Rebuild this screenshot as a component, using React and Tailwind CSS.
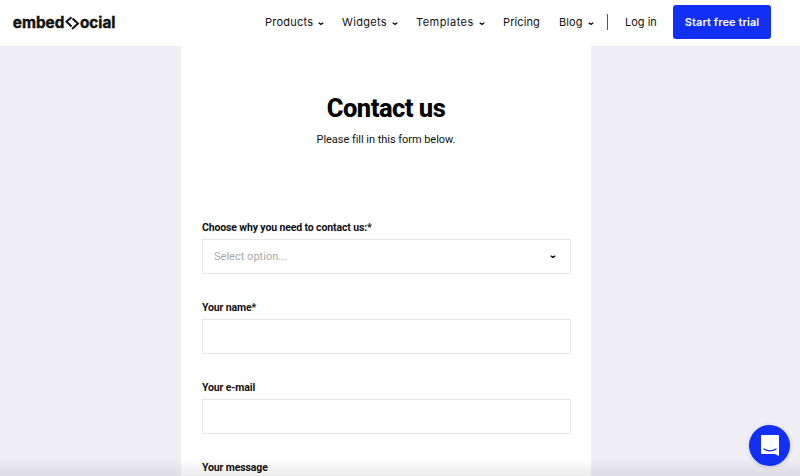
function Chevron({ className = '' }) {
  return (
    <svg className={`shrink-0 ${className}`} width="6" height="4" viewBox="0 0 6 4" fill="none" stroke="currentColor" strokeWidth="1.3">
      <path d="M.7.8 3 2.4 5.3.8" />
    </svg>
  );
}

function Logo() {
  return (
    <svg className="ml-3 mt-[13px] shrink-0" width="106" height="22" viewBox="0 0 106 22" role="img" aria-label="embedsocial">
      <g fontFamily="Inter, sans-serif" fontWeight="700" fontSize="15.5" fill="#111" stroke="#111" strokeWidth=".4">
        <text x="0.8" y="15" textLength="51.5" lengthAdjust="spacingAndGlyphs">embed</text>
        <text x="68" y="15" textLength="35.5" lengthAdjust="spacingAndGlyphs">ocial</text>
      </g>
      <path d="M59.500 4.300 54.500 8.500 59.500 13.500M60.500 5.500 66 10.500 60 16" fill="none" stroke="#111" strokeWidth="2" />
    </svg>
  );
}

const links = [
  { label: 'Products', box: 'w-[77px]', text: 'w-[48px] tracking-[0.22px]', menu: true },
  { label: 'Widgets', box: 'w-[74px]', text: 'w-[45px] tracking-[0.32px]', menu: true },
  { label: 'Templates', box: 'w-[87px]', text: 'w-[58px] tracking-[0.46px]', menu: true },
  { label: 'Pricing', box: 'w-[56px]', text: 'w-[38px] tracking-[0.1px]' },
  { label: 'Blog', box: 'w-[48px]', text: 'w-[24px] tracking-[0.1px]', menu: true },
];

function Field({ label, select }) {
  return (
    <div className="h-[80px]">
      <div className="h-[19px] pt-px text-[10.5px] leading-[14px] font-bold tracking-[-0.13px] text-[#111]">{label}</div>
      <div className="flex h-[35px] items-center justify-between border border-[#e7e7e9] bg-white pr-[14px] pl-[11px]">
        {select && (
          <>
            <span className="pt-[2px] text-[11px] tracking-[0.02px] text-[#aaa]">Select option...</span>
            <Chevron className="text-black" />
          </>
        )}
      </div>
    </div>
  );
}

export default function App() {
  return (
    <div className="relative flex h-[476px] w-[800px] flex-col overflow-hidden bg-[#efeff5] font-[Roboto,sans-serif] text-[#111]">
      <header className="flex h-[46px] shrink-0 bg-white">
        <Logo />
        <nav className="ml-[147px] flex h-[44px] items-center font-[Inter,sans-serif] text-[11px] whitespace-nowrap">
          {links.map((l) => (
            <a key={l.label} className={`flex items-center ${l.box}`}>
              <span className={l.text}>{l.label}</span>
              {l.menu && <Chevron className="mt-[3px] ml-[5px]" />}
            </a>
          ))}
          <span className="h-[16px] w-px bg-[#555]" />
          <a className="ml-[17px] w-[48px] tracking-[0px]">Log in</a>
          <a className="flex h-[34px] w-[98px] items-center justify-center rounded-[3px] bg-[#1230f5] text-[11px] font-semibold tracking-[0.08px] text-white">
            Start free trial
          </a>
        </nav>
      </header>
      <main className="ml-[181px] h-[430px] w-[410px] overflow-hidden bg-white px-[21px]">
        <h1 className="mt-[47px] text-center text-[25.5px] leading-[30px] font-extrabold tracking-[-0.5px] text-black">Contact us</h1>
        <p className="mt-[9px] h-[88px] pt-px text-center text-[11px] leading-[14px] tracking-[-0.04px]">Please fill in this form below.</p>
        <div className="w-[369px]">
          <Field label="Choose why you need to contact us:*" select />
          <Field label="Your name*" />
          <Field label="Your e-mail" />
          <Field label="Your message" />
        </div>
      </main>
      <div className="absolute inset-x-0 bottom-0 h-[18px] bg-linear-to-b from-black/0 to-black/8" />
      <button className="absolute top-[425px] left-[749px] flex size-[41px] items-center justify-center rounded-full bg-[#1230f5] shadow-[0_1px_5px_rgba(0,0,0,0.15)]">
        <svg width="20" height="23" viewBox="0 0 20 23">
          <path d="M2 1h16Q19 1 19 2v20l-4-2H2Q1 20 1 19V2Q1 1 2 1Z" fill="#fff" />
          <path d="M4 15c3.500 2.500 8.500 2.500 12 0" fill="none" stroke="#1230f5" strokeWidth="1.300" strokeLinecap="round" />
        </svg>
      </button>
    </div>
  );
}
